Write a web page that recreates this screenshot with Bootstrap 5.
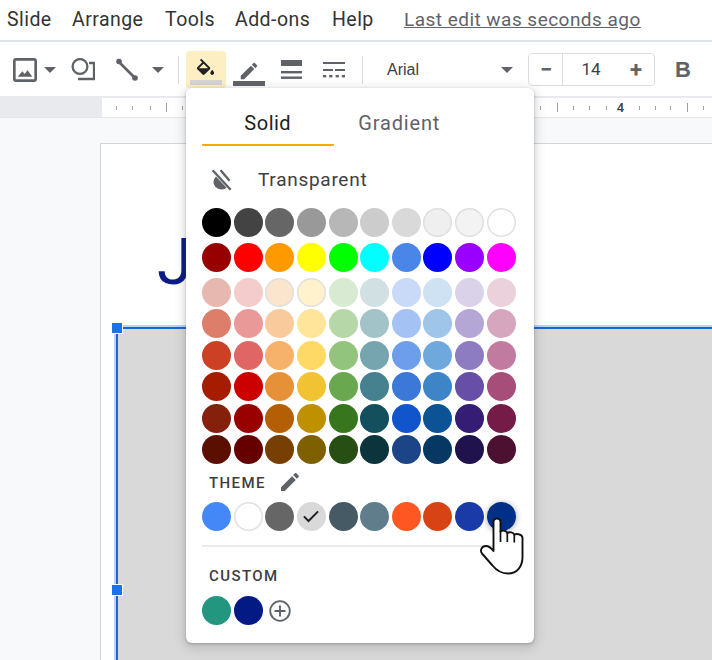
<!DOCTYPE html>
<html lang="en"><head><meta charset="utf-8"><title>Slides fill colour</title>
<link href="https://cdn.jsdelivr.net/npm/bootstrap@5.3.0/dist/css/bootstrap.min.css" rel="stylesheet">
<style>
html,body{margin:0;background:#fff}
body{font-family:Roboto,"Liberation Sans",sans-serif;color:#202124}
.app{width:712px;height:660px;overflow:hidden;position:relative}
.menubar{height:42px;border-bottom:2px solid #dfe3e6;font-size:19.5px;line-height:40px;letter-spacing:.45px;padding-left:7px}
.menubar span{color:#333}
.m1{width:65px}.m2{width:93px}.m3{width:70px}.m4{width:97px}.m5{width:72px}
.lastedit{color:#5f6368!important;text-decoration:underline;font-size:19px;letter-spacing:.47px}
.toolbar{height:56px;border-bottom:2px solid #e8eaed;padding:1px 0 0 9px;flex:none}
.toolbar svg{display:block;flex:none;fill:#5f6368}
.caret{width:0;height:0;border-left:6px solid transparent;border-right:6px solid transparent;border-top:6px solid #5f6368;flex:none}
.tsep{width:1px;height:28px;background:#dadce0;flex:none}
.ml3px{margin-left:3px}.ml7{margin-left:7px}.ml13{margin-left:13px}.ml14{margin-left:14px}.ml15{margin-left:15px}.ml16{margin-left:16px}.ml17{margin-left:17px}.ml20{margin-left:20px}.ml21{margin-left:21px}
.paint{width:40px;height:37px;background:#feefc3;border-radius:3px;flex:none;padding-top:5px}
.paint svg{fill:#202124;margin-left:8px}
.paintbar{height:5px;width:32px;background:#d4d4d4;margin:1px 0 0 4px}
.penbar{height:5px;width:32px;background:#5f6368;margin-top:-1px}
.pen{width:32px;flex:none;padding-top:6px}
.pen svg{margin-left:5px}
.fontname{font-size:16px;color:#3c4043;margin-left:24px;width:114px;flex:none;font-family:"Liberation Sans",Arial,sans-serif}
.stepper{width:127px;height:33px;flex:none;border:1px solid #dadce0;border-radius:4px;margin-left:15px;overflow:hidden}
.stepper .btn{border:0;border-radius:0;padding:0;background:#fff;color:#5f6368;font-weight:700;font-size:22px;line-height:30px;flex:none}
.stepper .s{width:34px}
.stepper .n{width:58px;font-size:17px;font-weight:400;color:#3c4043;line-height:31px;border-left:1px solid #dadce0;border-right:1px solid #dadce0;text-align:center}
.bold{font-family:"Liberation Sans",Arial,sans-serif;font-weight:700;font-size:22px;color:#5f6368;margin-left:20px}
.ruler{height:20px;flex:none;border-bottom:1px solid #e3e5e7}
.ruler .gut{width:102px;background:#e8eaed;flex:none}
.ruler svg{display:block;flex:none}
.canvas{flex:1;background:#f8f9fa;position:relative}
.slide{position:absolute;left:100px;top:25px;width:700px;height:600px;background:#fff;border:1px solid #d3d5d8;border-right:0}
.jay{position:absolute;left:56px;top:83px;font-size:64px;line-height:72px;font-weight:400;color:#0b1a85;font-family:Roboto,sans-serif}
.rect{position:absolute;left:15px;top:183px;width:700px;height:400px;background:#d9d9d9;border-top:2px solid #1a66d9;border-left:2px solid #1a66d9;box-shadow:0 -2px 0 #bcd3f5,-2px 0 0 #bcd3f5}
.handle{position:absolute;width:12px;height:12px;background:#1a73e8;border:1px solid #fff;left:-7px}
.h1{top:-7px}.h2{top:255px}
.popup{position:absolute;left:186px;top:88px;width:348px;height:555px;background:#fff;border-radius:6px;box-shadow:0 1px 3px rgba(60,64,67,.3),0 3px 10px 3px rgba(60,64,67,.16)}
.tabs{height:58px;padding-left:16px;padding-top:12px;font-size:20px;letter-spacing:.5px}
.tab{width:131.5px;height:46px;line-height:46px;text-align:center;color:#5f6368;flex:none;letter-spacing:.85px}
.tab.on{color:#202124;border-bottom:2.5px solid #f9ab00;border-radius:1px;letter-spacing:.5px}
.transp{height:61.5px;padding:6px 0 0 24px;font-size:19px;letter-spacing:.72px;color:#3c4043}
.transp svg{fill:#5f6368;margin-right:24px}
.sw{display:grid;grid-template-columns:repeat(10,29px);column-gap:2.6px;row-gap:2.6px;margin-left:16.2px}
.gapb{margin-bottom:6px}
.sw i{display:block;width:29px;height:29px;border-radius:50%}
.sw i.lt{box-shadow:inset 0 0 0 1.5px #e0e0e0}
.sw i.chk{display:flex;align-items:center;justify-content:center}
.sw i.hov{box-shadow:0 1px 6px rgba(0,0,0,.35)}
.label{font-size:15px;font-weight:500;letter-spacing:1.4px;color:#3c4043;padding-left:23px}
.l1{height:37.5px}
.l1 svg{fill:#5f6368;margin:-3px 0 0 12px}
.pdiv{height:2px;background:#e8eaed;margin:14px 14px 0 16px;opacity:1;border:0}
.l2{height:49.5px;padding-top:9px}
.plus{width:22px;height:22px;margin-left:3.500px;flex:none;align-self:center}
.hand{position:absolute;left:470px;top:495px;width:70px;height:90px}
</style></head>
<body>
<div class="app d-flex flex-column">
  <nav class="menubar d-flex flex-none bg-white">
    <span class="m1">Slide</span><span class="m2">Arrange</span><span class="m3">Tools</span><span class="m4">Add-ons</span><span class="m5">Help</span><span class="lastedit">Last edit was seconds ago</span>
  </nav>
  <div class="toolbar d-flex align-items-center bg-white">
    <svg width="32" height="32" viewBox="0 0 24 24"><path d="M19 5v14H5V5h14m0-2H5c-1.1 0-2 .9-2 2v14c0 1.1.9 2 2 2h14c1.1 0 2-.9 2-2V5c0-1.1-.9-2-2-2zm-4.860 8.860l-2.400 3.100L10 13l-3.500 4h11l-3.860-5.140z"/></svg>
    <div class="caret ml3px"></div>
    <svg class="ml15" width="24" height="24" viewBox="0 0 24 24"><circle cx="9" cy="8.500" r="7.400" fill="none" stroke="#5f6368" stroke-width="2.300"/><path d="M7 21h16V5h-5" fill="none" stroke="#5f6368" stroke-width="2.300"/></svg>
    <svg class="ml20" width="24" height="24" viewBox="0 0 24 24"><path d="M4 4l16 16" stroke="#5f6368" stroke-width="2.600"/><circle cx="4" cy="3.500" r="2.800"/><circle cx="20" cy="20" r="2.800"/></svg>
    <div class="caret ml13"></div>
    <div class="tsep ml14"></div>
    <div class="paint ml7">
      <svg width="23" height="23" viewBox="0 0 24 18.500"><path d="M16.560 8.940L7.620 0 6.210 1.410l2.380 2.380-5.150 5.150c-.59.59-.59 1.540 0 2.120l5.500 5.500c.29.290.68.440 1.060.440s.77-.15 1.060-.44l5.500-5.500c.59-.58.59-1.530 0-2.120zM5.210 10L10 5.210 14.790 10H5.210zM19 11.500s-2 2.170-2 3.500c0 1.100.9 2 2 2s2-.9 2-2c0-1.330-2-3.500-2-3.500z"/></svg>
      <div class="paintbar"></div>
    </div>
    <div class="pen ml7">
      <svg width="22" height="22" viewBox="0 0 24 24"><path d="M3 17.250V21h3.750L17.810 9.940l-3.750-3.750L3 17.250zM20.710 7.040c.39-.39.39-1.020 0-1.410l-2.340-2.340c-.39-.39-1.020-.39-1.410 0l-1.830 1.830 3.750 3.750 1.830-1.830z"/></svg>
      <div class="penbar"></div>
    </div>
    <svg class="ml16" width="21" height="20" viewBox="0 0 21 20"><rect y="0" width="21" height="6"/><rect y="11" width="21" height="2.400"/><rect y="16.500" width="21" height="2.400"/></svg>
    <svg class="ml21" width="22" height="18" viewBox="0 0 22 18"><rect y="1" width="22" height="2"/><rect y="8" width="10" height="2"/><rect x="12" y="8" width="10" height="2"/><rect y="14" width="3.200" height="2.400"/><rect x="6.200" y="14" width="3.200" height="2.400"/><rect x="12.600" y="14" width="3.200" height="2.400"/><rect x="18.800" y="14" width="3.200" height="2.400"/></svg>
    <div class="tsep ml17"></div>
    <div class="fontname">Arial</div>
    <div class="caret"></div>
    <div class="stepper btn-group d-flex">
      <button class="btn s">−</button><div class="btn n">14</div><button class="btn s">+</button>
    </div>
    <div class="bold">B</div>
  </div>
  <div class="ruler d-flex bg-white">
    <div class="gut"></div>
    <svg width="610" height="19" viewBox="0 0 610 19">
      <g fill="#9aa0a6">
        <rect x="14" y="8" width="1" height="4"/><rect x="30" y="8" width="1" height="4"/><rect x="48" y="8" width="1" height="4"/><rect x="64" y="5" width="1" height="9"/><rect x="80" y="8" width="1" height="4"/>
        <rect x="438" y="8" width="1" height="4"/><rect x="455" y="5" width="1" height="9"/><rect x="471" y="8" width="1" height="4"/><rect x="487" y="8" width="1" height="4"/><rect x="504" y="8" width="1" height="4"/>
        <rect x="537" y="8" width="1" height="4"/><rect x="553" y="8" width="1" height="4"/><rect x="568" y="8" width="1" height="4"/><rect x="585" y="5" width="1" height="9"/><rect x="601" y="8" width="1" height="4"/>
      </g>
      <text x="518.500" y="14" font-size="13" font-weight="500" fill="#3c4043" text-anchor="middle" font-family="Roboto,sans-serif">4</text>
    </svg>
  </div>
  <main class="canvas">
    <div class="slide">
      <div class="jay">J</div>
      <div class="rect"><div class="handle h1"></div><div class="handle h2"></div></div>
    </div>
  </main>

  <div class="popup">
    <div class="tabs d-flex">
      <div class="tab on">Solid</div><div class="tab">Gradient</div>
    </div>
    <div class="transp d-flex align-items-center">
      <svg width="24" height="24" viewBox="0 0 24 24"><path d="M3.500 1.500L21.500 21l-1.700 1.500L1.800 3z"/><path d="M6 8.500l10.500 11.300c-1.300 1.100-3 1.700-4.600 1.700C7.500 21.500 3.500 18 3.500 14c0-1.900 1-3.800 2.500-5.500z"/><path d="M11.500 1.500l9 10.500-1.800 1.500-9-10.500z"/></svg>
      <span>Transparent</span>
    </div>
    <div class="sw gapb">
      <i style="background:#000"></i><i style="background:#434343"></i><i style="background:#666"></i><i style="background:#999"></i><i style="background:#b7b7b7"></i><i style="background:#ccc"></i><i style="background:#d9d9d9"></i><i class="lt" style="background:#efefef"></i><i class="lt" style="background:#f3f3f3"></i><i class="lt" style="background:#fff"></i>
    </div>
    <div class="sw gapb">
      <i style="background:#980000"></i><i style="background:#f00"></i><i style="background:#f90"></i><i style="background:#ff0"></i><i style="background:#0f0"></i><i style="background:#0ff"></i><i style="background:#4a86e8"></i><i style="background:#00f"></i><i style="background:#90f"></i><i style="background:#f0f"></i>
    </div>
    <div class="sw">
      <i style="background:#e6b8af"></i><i style="background:#f4cccc"></i><i class="lt" style="background:#fce5cd"></i><i class="lt" style="background:#fff2cc"></i><i style="background:#d9ead3"></i><i style="background:#d0e0e3"></i><i style="background:#c9daf8"></i><i style="background:#cfe2f3"></i><i style="background:#d9d2e9"></i><i style="background:#ead1dc"></i>
      <i style="background:#dd7e6b"></i><i style="background:#ea9999"></i><i style="background:#f9cb9c"></i><i style="background:#ffe599"></i><i style="background:#b6d7a8"></i><i style="background:#a2c4c9"></i><i style="background:#a4c2f4"></i><i style="background:#9fc5e8"></i><i style="background:#b4a7d6"></i><i style="background:#d5a6bd"></i>
      <i style="background:#cc4125"></i><i style="background:#e06666"></i><i style="background:#f6b26b"></i><i style="background:#ffd966"></i><i style="background:#93c47d"></i><i style="background:#76a5af"></i><i style="background:#6d9eeb"></i><i style="background:#6fa8dc"></i><i style="background:#8e7cc3"></i><i style="background:#c27ba0"></i>
      <i style="background:#a61c00"></i><i style="background:#c00"></i><i style="background:#e69138"></i><i style="background:#f1c232"></i><i style="background:#6aa84f"></i><i style="background:#45818e"></i><i style="background:#3c78d8"></i><i style="background:#3d85c6"></i><i style="background:#674ea7"></i><i style="background:#a64d79"></i>
      <i style="background:#85200c"></i><i style="background:#900"></i><i style="background:#b45f06"></i><i style="background:#bf9000"></i><i style="background:#38761d"></i><i style="background:#134f5c"></i><i style="background:#1155cc"></i><i style="background:#0b5394"></i><i style="background:#351c75"></i><i style="background:#741b47"></i>
      <i style="background:#5b0f00"></i><i style="background:#600"></i><i style="background:#783f04"></i><i style="background:#7f6000"></i><i style="background:#274e13"></i><i style="background:#0c343d"></i><i style="background:#1c4587"></i><i style="background:#073763"></i><i style="background:#20124d"></i><i style="background:#4c1130"></i>
    </div>
    <div class="label l1 d-flex align-items-center">
      <span>THEME</span>
      <svg width="24" height="24" viewBox="0 0 24 24"><path d="M3 17.250V21h3.750L17.810 9.940l-3.750-3.750L3 17.250zM20.710 7.040c.39-.39.39-1.020 0-1.410l-2.340-2.340c-.39-.39-1.020-.39-1.410 0l-1.830 1.830 3.750 3.750 1.830-1.830z"/></svg>
    </div>
    <div class="sw">
      <i style="background:#4488f8"></i><i class="lt" style="background:#fff"></i><i style="background:#666"></i>
      <i class="chk" style="background:#d9d9d9"><svg width="20" height="20" viewBox="0 0 24 24"><path d="M3.500 12.500l5.500 5.500L20.500 6.500" fill="none" stroke="#202124" stroke-width="2.400"/></svg></i>
      <i style="background:#455a64"></i><i style="background:#607d8b"></i><i style="background:#ff5722"></i><i style="background:#d84315"></i><i style="background:#1a3aa8"></i><i class="hov" style="background:#002f87"></i>
    </div>
    <hr class="pdiv">
    <div class="label l2 d-flex align-items-center">CUSTOM</div>
    <div class="sw">
      <i style="background:#22967e"></i><i style="background:#031a85"></i>
      <svg class="plus" viewBox="0 0 22 22"><circle cx="11" cy="11" r="9.800" fill="none" stroke="#5f6368" stroke-width="1.800"/><path d="M11 5.500v11M5.500 11h11" stroke="#5f6368" stroke-width="1.900"/></svg>
    </div>
  </div>

  <svg class="hand" viewBox="0 0 70 90"><path d="M23.500 27a3.500 3.500 0 0 1 7 0v9.500c2.500-1.500 6-1 6.800 1.500 2.200-1.500 6-.8 7 1.500 3-1 8.200-.2 8.200 3.500V62c0 9.500-5.500 16.500-14.500 16.500-7.500 0-11.500-3-15.500-8L12 58.500c-2.200-3-.5-7.500 4-7.500 3.200 0 5.500 2.500 7.500 5z" fill="#fff" stroke="#111" stroke-width="1.900" stroke-linejoin="round"/><path d="M30.500 36v11M37.300 38v9M44.300 39.500v8" fill="none" stroke="#111" stroke-width="1.700"/></svg>
</div>
<script src="https://cdn.jsdelivr.net/npm/bootstrap@5.3.0/dist/js/bootstrap.bundle.min.js"></script>
</body></html>
